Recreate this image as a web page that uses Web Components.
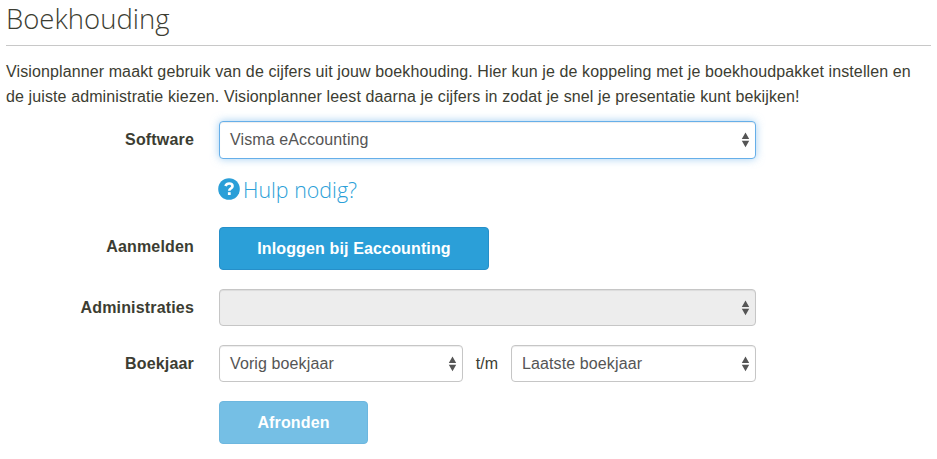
<!DOCTYPE html>
<html lang="nl">
<head>
<meta charset="utf-8">
<title>Boekhouding</title>
<style>
  body {
    margin: 0;
    background: #fff;
    color: #3c3d32;
    font: 16px/25px "Liberation Sans", Arial, sans-serif;
    letter-spacing: 0.112px;
    --blue: #2b9fd8;
  }
</style>
</head>
<body>
<settings-page>
  <span slot="title">Boekhouding</span>
  <span slot="intro">Visionplanner maakt gebruik van de cijfers uit jouw boekhouding. Hier kun je de koppeling met je boekhoudpakket instellen en<br>de juiste administratie kiezen. Visionplanner leest daarna je cijfers in zodat je snel je presentatie kunt bekijken!</span>
  <form-row label="Software" style="height: 38px; --label-shift: 2px">
    <select-box active>Visma eAccounting</select-box>
  </form-row>
  <form-row style="height: 32px; margin-top: 15px">
    <help-link>Hulp nodig?</help-link>
  </form-row>
  <form-row label="Aanmelden" style="height: 43px; margin-top: 21px; --label-shift: 4px">
    <action-button style="width: 270px">Inloggen bij Eaccounting</action-button>
  </form-row>
  <form-row label="Administraties" style="height: 37px; margin-top: 19px">
    <select-box disabled></select-box>
  </form-row>
  <form-row label="Boekjaar" style="height: 37px; margin-top: 19px">
    <select-box style="flex: none; width: 244px">Vorig boekjaar</select-box>
    <span style="width: 48px; text-align: center">t/m</span>
    <select-box>Laatste boekjaar</select-box>
  </form-row>
  <form-row style="height: 43px; margin-top: 19px">
    <action-button disabled style="width: 149px">Afronden</action-button>
  </form-row>
</settings-page>

<script>
const define = (name, html, setup) => {
  const template = document.createElement("template");
  template.innerHTML = html;

  customElements.define(name, class extends HTMLElement {
    constructor() {
      super();
      this.attachShadow({ mode: "open" });
      this.shadowRoot.appendChild(template.content.cloneNode(true));
      if (setup) setup(this, this.shadowRoot);
    }
  });
};

define("settings-page", `
<style>
  :host {
    display: block;
    padding: 0 6px;
  }
  h1 {
    box-sizing: border-box;
    height: 46px;
    margin: 0;
    border-bottom: 1px solid #c8c8c8;
    font: 300 27.5px/38px "Open Sans", sans-serif;
    letter-spacing: 0;
  }
  p {
    margin: 13px 0 12px;
    white-space: nowrap;
  }
</style>
<h1><slot name="title"></slot></h1>
<p><slot name="intro"></slot></p>
<slot></slot>
`);

define("form-row", `
<style>
  :host {
    display: grid;
    grid-template-columns: 188px 537px;
    column-gap: 25px;
    align-items: center;
  }
  label {
    text-align: right;
    font-weight: bold;
    letter-spacing: 0.17px;
    margin-top: calc(0px - var(--label-shift, 0px));
  }
  div {
    display: flex;
    align-items: center;
    height: 100%;
  }
</style>
<label></label>
<div><slot></slot></div>
`, (host, root) => {
  root.querySelector("label").textContent = host.getAttribute("label") || "";
});

define("select-box", `
<style>
  :host {
    box-sizing: border-box;
    display: flex;
    flex: 1;
    align-items: center;
    justify-content: space-between;
    height: 100%;
    padding: 0 5px 0 10px;
    border: 1px solid #c6c6c6;
    border-radius: 4px;
    background: #fff;
    box-shadow: inset 0 1px 1px rgba(0, 0, 0, .075);
    color: #555;
  }
  :host([active]) {
    border-color: #66afe9;
    box-shadow: inset 0 1px 1px rgba(0, 0, 0, .075), 0 0 8px rgba(102, 175, 233, .6);
  }
  :host([active]) span {
    margin-top: -2px;
  }
  :host([disabled]) {
    background: #ededed;
  }
</style>
<span><slot></slot></span>
<svg width="9" height="16" viewBox="0 0 9 16" fill="#555">
  <path d="M4.5.5 8.2 7H.8zM4.5 15.2 8.2 8.8H.8z"/>
</svg>
`);

define("help-link", `
<style>
  :host {
    display: flex;
    align-items: center;
    gap: 3px;
    color: var(--blue);
    font: 300 21.4px/30px "Open Sans", sans-serif;
    letter-spacing: 0;
  }
  svg {
    margin: -2px 0 0 -1px;
  }
</style>
<svg width="22" height="22" viewBox="0 0 22 22">
  <circle cx="11" cy="11" r="10.8" fill="#2b9fd8"/>
  <path d="M7.4 8.1C8.2 6.2 9.4 5.5 11.1 5.5c1.9 0 3.4 1 3.4 2.7 0 2.3-3.2 2.3-3.2 4.5" fill="none" stroke="#fff" stroke-width="2.7"/>
  <path d="M9.9 14.2h2.8V17H9.9z" fill="#fff"/>
</svg>
<span><slot></slot></span>
`);

define("action-button", `
<style>
  :host {
    box-sizing: border-box;
    display: flex;
    align-items: center;
    justify-content: center;
    height: 100%;
    border: 1px solid #268fc9;
    border-radius: 4px;
    background: var(--blue);
    color: #fff;
    font-weight: bold;
    letter-spacing: 0.14px;
  }
  :host([disabled]) {
    border-color: #6db7df;
    background: #75bfe5;
  }
</style>
<slot></slot>
`);
</script>
</body>
</html>
